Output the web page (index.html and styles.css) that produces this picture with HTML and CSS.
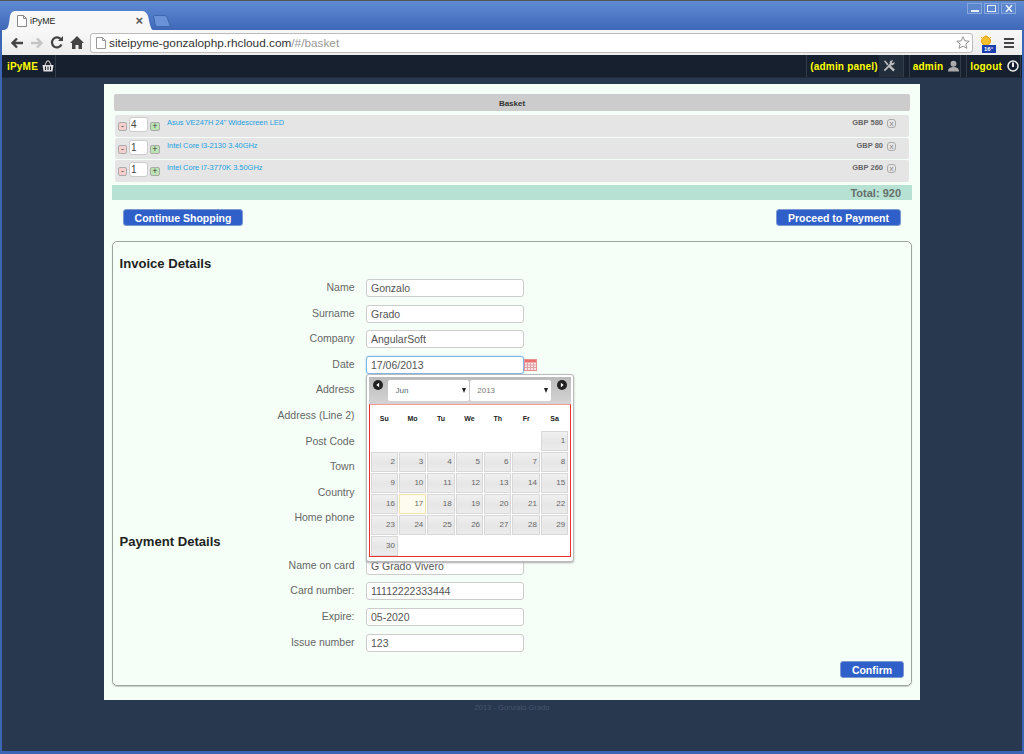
FILE: index.html
```html
<!DOCTYPE html>
<html lang="en">
<head>
  <meta charset="UTF-8" />
  <title>iPyME</title>
  <link rel="stylesheet" href="styles.css">
</head>
<body>
  <div class="window">
    <div class="tabstrip">
      <div class="tab">
        <svg class="tab-shape" width="150" height="19" viewBox="0 0 150 19"><path d="M0 19 C4 19 5 17 6 12 L7 5 C8 1 10 0 13 0 H139 C142 0 144 2 145 5 L147 14 C148 17 149 19 150 19 Z" fill="#f7f7f7"/></svg>
        <svg class="page-icon" width="10" height="12" viewBox="0 0 10 12"><path d="M.5.5H6.5L9.5 3.5V11.500H.5Z M6.5.5V3.5H9.5" fill="#fff" stroke="#888"/></svg>
        <span class="tab-title">iPyME</span>
        <span class="tab-close">×</span>
      </div>
      <svg class="new-tab" width="18" height="12" viewBox="0 0 18 12"><path d="M.5 1 C.5 .5 1 .5 1.5 .5 H11 C13 .5 14 1.500 14.500 3 L16.500 9 C17 10.500 17.500 11.500 18 11.500 H4 C3 11.500 2.500 10.500 2 9 Z" fill="#6a92d8" stroke="#3f66ad"/></svg>
      <div class="win-controls">
        <span class="win-btn"><svg width="8" height="6" viewBox="0 0 8 6"><rect y="4" width="8" height="2" fill="#e8eefa"/></svg></span>
        <span class="win-btn"><svg width="9" height="7" viewBox="0 0 9 7"><rect x=".5" y=".5" width="8" height="6" fill="none" stroke="#e8eefa"/></svg></span>
        <span class="win-btn"><svg width="8" height="7" viewBox="0 0 8 7"><path d="M1 0 L7 7 M7 0 L1 7" stroke="#e8eefa" stroke-width="1.600"/></svg></span>
      </div>
    </div>

    <div class="toolbar">
      <svg class="tool" width="14" height="12" viewBox="0 0 14 12"><path d="M13 6H3M7 1.500 2.500 6 7 10.500" fill="none" stroke="#444" stroke-width="2.400"/></svg>
      <svg class="tool" width="14" height="12" viewBox="0 0 14 12"><path d="M1 6H11M7 1.500 11.500 6 7 10.500" fill="none" stroke="#c4c4c4" stroke-width="2.400"/></svg>
      <svg class="tool" width="14" height="13" viewBox="0 0 14 13"><path d="M11.500 8.500A5 5 0 1 1 11 3.500" fill="none" stroke="#444" stroke-width="2.200"/><path d="M8 5H13V0Z" fill="#444"/></svg>
      <svg class="tool" width="14" height="13" viewBox="0 0 14 13"><path d="M7 0 14 7H12V13H8.500V9H5.500V13H2V7H0Z" fill="#444"/></svg>
      <div class="omnibox">
        <svg width="10" height="12" viewBox="0 0 10 12"><path d="M.5.5H6.500L9.500 3.500V11.500H.5Z M6.500.5V3.500H9.500" fill="#fff" stroke="#999"/></svg>
        <span class="url">siteipyme-gonzalophp.rhcloud.com<span class="url-rest">/#/basket</span></span>
        <svg class="star" width="14" height="13" viewBox="0 0 15 14"><path d="M7.500 .8 9.500 5.200 14.200 5.600 10.600 8.700 11.700 13.300 7.500 10.900 3.300 13.300 4.400 8.700 .8 5.600 5.500 5.200Z" fill="#fff" stroke="#888"/></svg>
      </div>
      <div class="weather">
        <svg width="18" height="18" viewBox="0 0 18 18"><path d="M6 0V2M1 2 2.500 3.500M11 2 9.500 3.500" stroke="#f0b020"/><circle cx="6" cy="6" r="4.500" fill="#f4c02c" stroke="#e8a010"/><rect x="2" y="10" width="14" height="8" fill="#1c3fb0"/></svg>
        <span class="weather-temp">16°</span>
      </div>
      <div class="menu-icon"><i></i><i></i><i></i></div>
    </div>

    <nav class="navbar">
      <a class="nav-item nav-brand">iPyME
        <svg width="12" height="12" viewBox="0 0 12 12"><path d="M.5 5H11.500L10.500 11.500H1.500Z" fill="#ddd"/><path d="M3 5 5 1H7L9 5" fill="none" stroke="#ddd"/><path d="M3.500 6.500V10M6 6.500V10M8.500 6.500V10" stroke="#16202e"/></svg>
      </a>
      <div class="nav-right">
        <a class="nav-item nav-admin">(admin panel)
          <svg width="12" height="12" viewBox="0 0 13 13"><path d="M1.500 11.500 8.500 4.500" stroke="#bbb" stroke-width="2"/><path d="M7 3.500C7 1.500 9 0 11 .5L9.500 2.500 10.500 3.500 12.500 2C13 4 11.500 6 9.500 6Z" fill="#bbb"/><path d="M1 1 2.500 .5 6 4.500 4.500 6Z" fill="#bbb"/><path d="M6 5.500 12 11.500" stroke="#bbb" stroke-width="2.600"/></svg>
        </a>
        <a class="nav-item">admin
          <svg width="11" height="12" viewBox="0 0 12 12"><circle cx="6" cy="3.500" r="3.200" fill="#aaa"/><path d="M0 12C0 8 3 7 6 7S12 8 12 12Z" fill="#aaa"/></svg>
        </a>
        <a class="nav-item">logout
          <svg width="12" height="12" viewBox="0 0 12 12"><circle cx="6" cy="6" r="5" fill="none" stroke="#eee" stroke-width="1.500"/><path d="M6 2.500V7" stroke="#eee" stroke-width="2"/></svg>
        </a>
      </div>
    </nav>

    <main class="page">
      <div class="sheet">
        <div class="basket-head">Basket</div>
        <div class="basket-row">
          <span class="qty-btn minus">-</span>
          <input class="qty" type="text" value="4">
          <span class="qty-btn plus">+</span>
          <a class="product">Asus VE247H 24" Widescreen LED</a>
          <span class="price">GBP 580</span>
          <span class="remove">x</span>
        </div>
        <div class="basket-row">
          <span class="qty-btn minus">-</span>
          <input class="qty" type="text" value="1">
          <span class="qty-btn plus">+</span>
          <a class="product">Intel Core i3-2130 3.40GHz</a>
          <span class="price">GBP 80</span>
          <span class="remove">x</span>
        </div>
        <div class="basket-row">
          <span class="qty-btn minus">-</span>
          <input class="qty" type="text" value="1">
          <span class="qty-btn plus">+</span>
          <a class="product">Intel Core i7-3770K 3.50GHz</a>
          <span class="price">GBP 260</span>
          <span class="remove">x</span>
        </div>
        <div class="total">Total: 920</div>
        <div class="actions">
          <button class="btn btn-continue">Continue Shopping</button>
          <button class="btn btn-proceed">Proceed to Payment</button>
        </div>

        <form class="panel">
          <h2>Invoice Details</h2>
          <div class="field"><label>Name</label><input type="text" value="Gonzalo"></div>
          <div class="field"><label>Surname</label><input type="text" value="Grado"></div>
          <div class="field"><label>Company</label><input type="text" value="AngularSoft"></div>
          <div class="field date-field">
            <label>Date</label><input class="focused" type="text" value="17/06/2013">
            <svg class="cal-icon" width="13" height="12" viewBox="0 0 13 12"><rect x=".5" y=".5" width="12" height="11" fill="#fbe4e4" stroke="#e89090"/><rect x="1" y="1" width="11" height="2.500" fill="#e87070"/><path d="M1 6H12M1 8.500H12M3.500 4V11M6.500 4V11M9.500 4V11" stroke="#e0a4a8"/></svg>
            <div class="datepicker">
              <div class="dp-head">
                <span class="dp-arrow"><svg width="10" height="10" viewBox="0 0 9 9"><circle cx="4.500" cy="4.500" r="4.500" fill="#222"/><path d="M5.500 2.500 3 4.500 5.500 6.500Z" fill="#fff"/></svg></span>
                <span class="dp-select dp-month">Jun</span>
                <span class="dp-select dp-year">2013</span>
                <span class="dp-arrow"><svg width="10" height="10" viewBox="0 0 9 9"><circle cx="4.500" cy="4.500" r="4.500" fill="#222"/><path d="M3.500 2.500 6 4.500 3.500 6.500Z" fill="#fff"/></svg></span>
              </div>
              <div class="dp-body">
                <div class="dp-grid">
                  <b>Su</b><b>Mo</b><b>Tu</b><b>We</b><b>Th</b><b>Fr</b><b>Sa</b>
                  <i></i><i></i><i></i><i></i><i></i><i></i><span>1</span>
                  <span>2</span><span>3</span><span>4</span><span>5</span><span>6</span><span>7</span><span>8</span>
                  <span>9</span><span>10</span><span>11</span><span>12</span><span>13</span><span>14</span><span>15</span>
                  <span>16</span><span class="today">17</span><span>18</span><span>19</span><span>20</span><span>21</span><span>22</span>
                  <span>23</span><span>24</span><span>25</span><span>26</span><span>27</span><span>28</span><span>29</span>
                  <span>30</span>
                </div>
              </div>
            </div>
          </div>
          <div class="field"><label>Address</label><input type="text"></div>
          <div class="field"><label>Address (Line 2)</label><input type="text"></div>
          <div class="field"><label>Post Code</label><input type="text"></div>
          <div class="field"><label>Town</label><input type="text"></div>
          <div class="field"><label>Country</label><input type="text"></div>
          <div class="field"><label>Home phone</label><input type="text"></div>
          <h2 class="payment">Payment Details</h2>
          <div class="field"><label>Name on card</label><input type="text" value="G Grado Vivero"></div>
          <div class="field"><label>Card number:</label><input type="text" value="11112222333444"></div>
          <div class="field"><label>Expire:</label><input type="text" value="05-2020"></div>
          <div class="field"><label>Issue number</label><input type="text" value="123"></div>
          <div class="panel-foot"><button class="btn btn-confirm" type="button">Confirm</button></div>
        </form>
      </div>
      <footer class="foot">2013 - Gonzalo Grado</footer>
    </main>
  </div>
</body>
</html>
```

FILE: styles.css
```css
* {
  box-sizing: border-box;
}
html, body {
  margin: 0;
  height: 754px;
  overflow: hidden;
}
body {
  font-family: "Liberation Sans", Arial, sans-serif;
  background: #3c66b4;
}
.window {
  height: 754px;
  display: flex;
  flex-direction: column;
  padding: 0 2px 3px;
  border-top: 1px solid #555;
}
.tabstrip {
  height: 29px;
  flex: none;
  display: flex;
  align-items: flex-end;
  margin: 0 -2px;
  padding-left: 3px;
  background: linear-gradient(#5f8ad4, #3f69b8);
}
.tab {
  position: relative;
  width: 150px;
  height: 19px;
  display: flex;
  align-items: center;
  padding: 0 10px 0 14px;
}
.tab-shape {
  position: absolute;
  left: 0;
  top: 0;
}
.page-icon, .tab-title, .tab-close {
  position: relative;
}
.tab-title {
  margin-left: 3px;
  font-size: 8.8px;
  color: #222;
  flex: 1;
}
.tab-close {
  font-size: 13px;
  font-weight: bold;
  color: #555;
}
.new-tab {
  margin-bottom: 3px;
}
.win-controls {
  align-self: flex-start;
  display: flex;
  gap: 2px;
  margin: 2px 8px 0 auto;
}
.win-btn {
  width: 15px;
  height: 11px;
  display: flex;
  align-items: center;
  justify-content: center;
  background: #5b85cc;
  border: 1px solid #87a6dc;
}
.toolbar {
  height: 25px;
  flex: none;
  display: flex;
  align-items: center;
  gap: 6px;
  padding: 0 8px;
  background: linear-gradient(#f8f8f8, #ececec);
}
.tool {
  flex: none;
}
.omnibox {
  flex: 1;
  height: 20px;
  display: flex;
  align-items: center;
  gap: 3px;
  margin-right: 1px;
  padding: 0 2px 0 5px;
  background: #fff;
  border: 1px solid #bbb;
  border-radius: 3px;
}
.url {
  flex: 1;
  font-size: 11.8px;
  color: #333;
}
.url-rest {
  color: #999;
}
.weather {
  position: relative;
  width: 18px;
  height: 18px;
  margin-top: 2px;
}
.weather-temp {
  position: absolute;
  left: 4px;
  top: 11px;
  font-size: 6px;
  font-weight: bold;
  color: #fff;
}
.menu-icon {
  width: 10px;
  display: flex;
  flex-direction: column;
  gap: 2px;
}
.menu-icon i {
  height: 2px;
  background: #444;
}
.navbar {
  height: 23px;
  flex: none;
  display: flex;
  justify-content: space-between;
  padding-right: 1px;
  background: #16202e;
  border-bottom: 1px solid #1e2a3a;
}
.nav-item {
  display: flex;
  align-items: center;
  gap: 5px;
  padding: 0 1px 0 3px;
  color: #ffff00;
  font-size: 10px;
  font-weight: bold;
  letter-spacing: .2px;
  border-right: 1px solid #333d4a;
}
.nav-brand {
  gap: 4px;
  padding-left: 5px;
}
.nav-right {
  display: flex;
  gap: 5px;
}
.nav-right .nav-item {
  border-left: 1px solid #333d4a;
}
.nav-admin {
  padding-right: 8px;
  background: linear-gradient(90deg, transparent 72px, #232e3c 72px);
}
.page {
  flex: 1;
  background: #28384f;
  padding-top: 6px;
}
.sheet {
  width: 816px;
  height: 616px;
  margin-left: 102px;
  padding: 10px 8px 0;
  background: #f5fff7;
}
.basket-head {
  height: 17px;
  margin: 0 2px 4px;
  background: #cccccc;
  border-radius: 2px;
  text-align: center;
  font-size: 8px;
  font-weight: bold;
  line-height: 19px;
  color: #333;
}
.basket-row {
  height: 21.5px;
  margin: 0 3px 1px;
  display: flex;
  align-items: flex-start;
  background: #e5e5e5;
  padding: 2px 13px 0 3px;
  border-radius: 2px;
}
.qty-btn {
  width: 9px;
  height: 9px;
  margin-top: 5px;
  border: 1px solid #aaa;
  border-radius: 2px;
  font-size: 9px;
  line-height: 7px;
  text-align: center;
  color: #444;
}
.minus {
  background: #f6cfcf;
}
.plus {
  width: 10px;
  background: #bde3b4;
}
.qty {
  width: 19px;
  height: 15px;
  margin: 0 2px;
  padding: 0 1px;
  border: 1px solid #ccc;
  border-radius: 3px;
  background: #fff;
  font: 10px "Liberation Sans", Arial, sans-serif;
  color: #444;
}
.product {
  margin: 1px 0 0 7px;
  font-size: 7.45px;
  line-height: 10px;
  color: #1a9fe0;
  flex: 1;
}
.price {
  margin-top: 1px;
  font-size: 7.5px;
  font-weight: bold;
  line-height: 10px;
  color: #666;
}
.remove {
  width: 9px;
  height: 9px;
  margin: 2px 0 0 4px;
  border: 1px solid #aaa;
  border-radius: 3px;
  font-size: 8px;
  line-height: 7px;
  text-align: center;
  color: #888;
}
.total {
  height: 15px;
  margin-top: 3px;
  padding-right: 11px;
  background: #b7e2d3;
  text-align: right;
  font-size: 11px;
  font-weight: bold;
  line-height: 16px;
  color: #666f6c;
}
.actions {
  display: flex;
  justify-content: space-between;
  padding: 9px 11px 0;
  height: 41px;
}
.btn {
  height: 17px;
  padding: 1px 0 0;
  border: 1px solid #7d9ad0;
  border-radius: 3px;
  background: #2f5fc8;
  color: #fff;
  font: bold 10.5px "Liberation Sans", Arial, sans-serif;
}
.btn-continue {
  width: 120px;
}
.btn-proceed {
  width: 125px;
}
.btn-confirm {
  width: 64px;
}
.panel {
  height: 445px;
  padding: 13.6px 7px 0 6.5px;
  border: 1px solid #97a59c;
  border-radius: 5px;
  box-shadow: 0 1px 1px #c4cec6;
}
.panel h2 {
  height: 17px;
  margin: 0 0 7px;
  font-size: 13.1px;
  line-height: 17px;
  color: #222;
}
.panel .payment {
  margin: -1.9px 0 6.6px;
}
.field {
  position: relative;
  height: 25.6px;
  display: flex;
  align-items: flex-start;
}
.field label {
  width: 235px;
  text-align: right;
  font-size: 10.5px;
  line-height: 16px;
  color: #666;
}
.field input {
  width: 158px;
  height: 18px;
  margin-left: 11.5px;
  padding: 0 4px;
  border: 1px solid #ccc;
  border-radius: 3px;
  background: #fff;
  font: 10.5px "Liberation Sans", Arial, sans-serif;
  color: #555;
}
.field input.focused {
  border-color: #7fb5e8;
  box-shadow: 0 0 2px #9cc8f0;
}
.cal-icon {
  margin-top: 3px;
}
.datepicker {
  position: absolute;
  left: 246.5px;
  top: 18px;
  width: 207.5px;
  height: 188px;
  z-index: 2;
  padding: 2px;
  background: #fff;
  border: 1px solid #bbb;
  border-radius: 3px;
  box-shadow: 0 1px 2px #aaa;
}
.dp-head {
  height: 27px;
  display: flex;
  align-items: flex-start;
  padding: 3px 4px 0;
  background: linear-gradient(#bbb, #d4d4d4);
}
.dp-arrow {
  width: 10px;
  height: 10px;
  line-height: 0;
  flex: none;
}
.dp-select {
  position: relative;
  width: 81px;
  height: 21px;
  padding-left: 7.5px;
  background: #fff;
  border-radius: 2px;
  font-size: 8px;
  line-height: 22px;
  color: #777;
}
.dp-month {
  margin-left: 5px;
  color: #567;
}
.dp-year {
  margin: 0 6px 0 1px;
}
.dp-select::after {
  content: "";
  position: absolute;
  right: 3px;
  top: 8px;
  border: 2.5px solid transparent;
  border-top: 5px solid #222;
  border-bottom: 0;
}
.dp-body {
  height: 153px;
  padding-top: 1px;
  border: 1px solid #e83030;
  border-top-color: #f59a9a;
  background: #fff;
}
.dp-grid {
  display: grid;
  grid-template-columns: repeat(7, 28.4px);
  grid-template-rows: 25px repeat(6, 21px);
}
.dp-grid b {
  font-size: 7px;
  line-height: 25px;
  text-align: center;
  color: #222;
}
.dp-grid span {
  margin: 0 .5px 1px;
  padding-right: 2px;
  background: linear-gradient(#f0f0f0, #e6e6e6 55%, #ececec);
  border: 1px solid #d8d8d8;
  text-align: right;
  font-size: 8px;
  line-height: 18px;
  color: #666;
}
.dp-grid .today {
  background: #fdfcee;
  border-color: #f1e6a8;
}
.panel-foot {
  display: flex;
  justify-content: flex-end;
  padding-top: 2.2px;
}
.foot {
  margin-top: 3px;
  text-align: center;
  font-size: 7.6px;
  color: #46566c;
}
```
